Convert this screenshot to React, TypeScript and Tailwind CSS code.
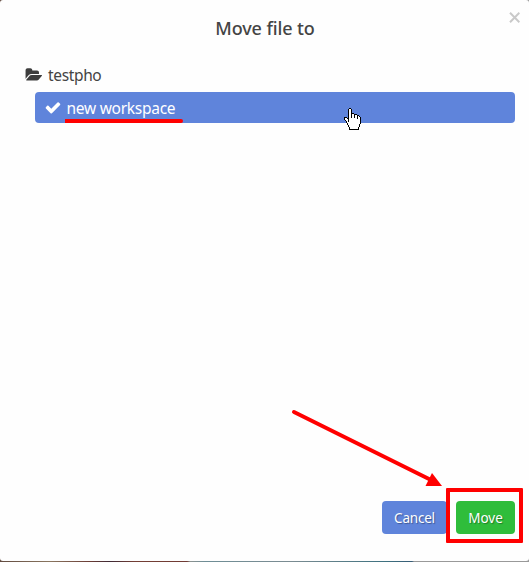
import React from "react";

const HAND = [
  ".....XX..........",
  "....XooX.........",
  "....XooX.........",
  "....XooX.........",
  "....XooX.........",
  "....XooXXX.......",
  "....XooXooXXX....",
  "....XooXooXooXX..",
  "....XooXooXooXoX.",
  "XXX.XooXooXooXooX",
  "XooXXooooooooXooX",
  "XoooXoooooooooooX",
  ".XooXoooooooooooX",
  "..XoXoooooooooooX",
  "..XoooooooooooooX",
  "...XooooooooooooX",
  "...XoooooooooooX.",
  "....XooooooooooX.",
  "....XooooooooooX.",
  ".....XooooooooX..",
  ".....XooooooooX..",
  ".....XXXXXXXXXX..",
];

function HandCursor() {
  return (
    <svg
      className="absolute left-[344px] top-[108px]"
      width="17"
      height="22"
      viewBox="0 0 17 22"
      shapeRendering="crispEdges"
    >
      {HAND.flatMap((row, y) =>
        row.split("").map((c, x) =>
          c === "." ? null : (
            <rect key={`${x}-${y}`} x={x} y={y} width="1" height="1" fill={c === "X" ? "#000" : "#fff"} />
          ),
        ),
      )}
    </svg>
  );
}

function FolderOpen() {
  return (
    <svg className="h-4 w-[17px] shrink-0" viewBox="0 0 1943 1792" fill="#3d3d3d">
      <path d="M1943 952q0 31-31 66l-336 396q-43 51-120.5 86.5t-143.5 35.5h-1088q-34 0-60.5-13t-26.5-43q0-31 31-66l336-396q43-51 120.5-86.5t143.5-35.5h1088q34 0 60.5 13t26.5 43zm-343-344v160h-832q-94 0-197 47.5t-164 119.5l-337 396-5 6q0-4-.5-12.5t-.5-12.5v-960q0-92 66-158t158-66h320q92 0 158 66t66 158v32h544q92 0 158 66t66 158z" />
    </svg>
  );
}

function Check() {
  return (
    <svg className="h-[17px] w-[17px] shrink-0" viewBox="-50 0 1792 1792" fill="#fff">
      <path d="M1671 566q0 40-28 68l-724 724-136 136q-28 28-68 28t-68-28l-136-136-362-362q-28-28-28-68t28-68l136-136q28-28 68-28t68 28l294 295 656-657q28-28 68-28t68 28l136 136q28 28 28 68z" />
    </svg>
  );
}

export default function App() {
  return (
    <div className="relative h-[562px] w-[529px] overflow-hidden bg-[linear-gradient(90deg,#624b40_0px,#8a7660_50px,#6b3c35_90px,#3f2935_110px,#743f35_135px,#703a34_187px,#8c9290_190px,#6e8d96_205px,#7b8c92_290px,#3e7180_385px,#365c76_412px,#999_414px,#999_529px)] font-['Noto_Sans',sans-serif] text-[#444]">
      <div className="flex h-[561px] flex-col rounded-[3px] bg-[#fefefe]">
        <header className="flex h-14 shrink-0 items-center justify-center pl-[1px]">
          <h1 className="text-lg font-medium leading-7 tracking-[-0.1px]">Move file to</h1>
          <button className="absolute right-[9px] top-[12px]" aria-label="Close">
            <svg width="11" height="11" viewBox="0 0 11 11" stroke="#c9c9c9" strokeWidth="2">
              <path d="M1 .8l9.4 9.4M10.4.8L1 10.2" />
            </svg>
          </button>
        </header>
        <main className="flex grow flex-col pl-[25px] pr-[14px]">
          <div className="flex h-9 items-center gap-[6px] pt-[2px]">
            <FolderOpen />
            <span className="text-[15.5px] leading-6 tracking-[-0.35px]">testpho</span>
          </div>
          <div className="ml-[10px] flex h-[31px] items-center gap-[5px] rounded bg-[#5f84db] pl-[9px]">
            <Check />
            <span className="pl-[0.5px] text-[15.5px] leading-6 tracking-[-0.27px] text-white">new workspace</span>
          </div>
        </main>
        <footer className="flex h-[60px] shrink-0 items-start justify-end gap-[9px] pr-[14px]">
          <button className="h-[33px] w-[65px] rounded bg-[#5f84db] pt-[2px] text-[13.5px] tracking-[-0.2px] text-white [text-shadow:1px_1px_1px_#0005]">Cancel</button>
          <button className="h-[33px] w-[59px] rounded bg-[#2fbd3b] pt-[2px] text-[13.5px] text-white [text-shadow:1px_1px_1px_#0005]">Move</button>
        </footer>
      </div>
      <div className="absolute left-[65px] top-[119px] h-1 w-[118px] rounded-r-full bg-[#f00]" />
      <div className="absolute left-[446px] top-[488px] h-[55px] w-[77px] rounded-[1px] border-4 border-[#f00]" />
      <svg className="absolute left-[290px] top-[408px]" width="156" height="84" viewBox="290 408 156 84">
        <path d="M294 412L430 479.5" stroke="#f00" strokeWidth="4" strokeLinecap="round" />
        <path d="M432 473L442 486H425.5z" fill="#f00" />
      </svg>
      <HandCursor />
    </div>
  );
}
